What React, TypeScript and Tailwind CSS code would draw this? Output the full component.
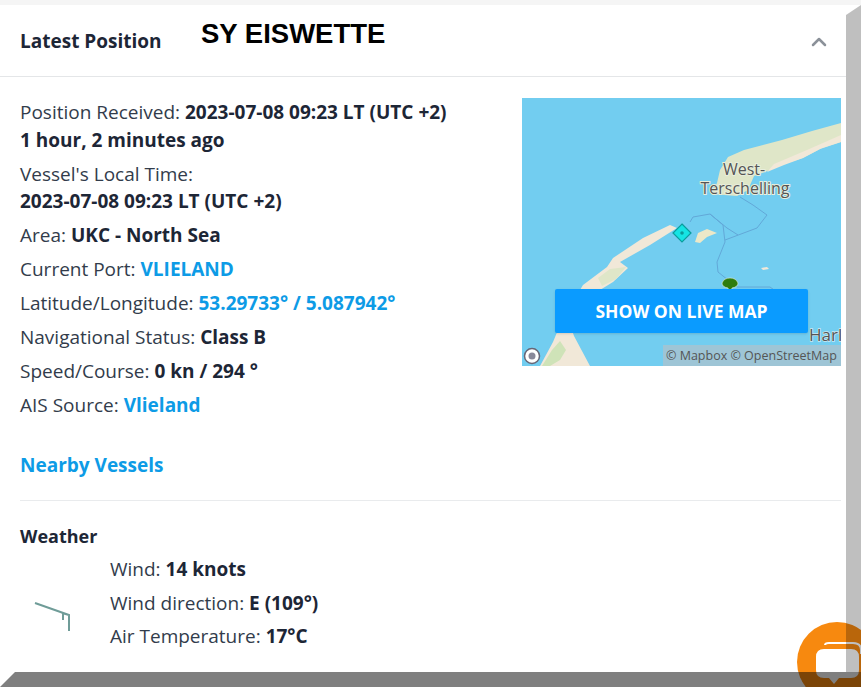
import { ChevronUp } from "lucide-react";

const font = { fontFamily: '"Open Sans", "Noto Sans", sans-serif' };

const MapDrawing = () => (
  <svg viewBox="0 0 319 268" className="block h-[268px] w-[319px]">
    <rect width="319" height="268" fill="#72cdf0" />
    {/* Terschelling */}
    <path d="M195 85 L198 72 L206 59 L222 52 L260 42 L290 33 L319 25 L319 44 L300 50 L281 60 L262 66 L248 72 L232 78 L226 92 L215 98 L190 96 Z" fill="#dfe6c8" />
    <path d="M319 37 L319 44 L298 51 L281 60 L262 67 L245 74 L252 66 L285 52 Z" fill="#f1e8d8" />
    {/* Vlieland */}
    <path d="M148 127 L155 130 L128 147 L98 164 L106 170 L91 184 L78 192 L58 192 L61 187 L85 169 L91 160 L121 140 Z" fill="#f1e8d8" />
    <path d="M76 180 L88 171 L104 169 L94 181 L80 188 Z" fill="#dfe6c8" />
    <path d="M173 144 L176 135 L185 131 L195 135 L185 139 L178 145 Z" fill="#ece8c8" />
    <path d="M239 170 L245 169 L247 171 L241 172 Z" fill="#f1e8d8" />
    {/* Texel tip */}
    <path d="M18 268 L31 244 L36 232 L50 232 L52 238 L68 268 Z" fill="#f1e8d8" />
    <path d="M20 268 L30 252 L38 243 L44 252 L38 262 L28 268 Z" fill="#cfe3b8" />
    {/* Route */}
    <path d="M168 124 L171 119 L188 116 L201 127 L203 144 L195 164 L196 174 L206 182 M215 189 L248 189 L255 194" fill="none" stroke="#62a8d8" strokeWidth="1" />
    <path d="M188 116 L205 130 L216 137 M203 142 L235 130 L245 117 L231 107 L218 99" fill="none" stroke="#62a8d8" strokeWidth="1" />
    {/* Vessel marker */}
    <path d="M160 126 L169 135 L160 144 L151 135 Z" fill="#15e4e4" stroke="#0b9c9c" strokeWidth="1.2" />
    <circle cx="160" cy="135" r="1.8" fill="#0b9c9c" />
    {/* Tree */}
    <path d="M208 180 Q214 180 216 185 Q216 189 210 190 L209 193 L207 193 L206 190 Q200 189 200 185 Q202 180 208 180 Z" fill="#2f7d0e" stroke="#e8eedc" strokeWidth="0.6" />
    <text x="222" y="77" fontSize="16" fill="#555" stroke="#e8eedc" strokeWidth="2" paintOrder="stroke" textAnchor="middle" style={font}>
      West-
    </text>
    <text x="223" y="96" fontSize="16" fill="#555" stroke="#e8eedc" strokeWidth="2" paintOrder="stroke" textAnchor="middle" style={font}>
      Terschelling
    </text>
    <text x="287" y="243" fontSize="17" fill="#555" stroke="#cfe8f0" strokeWidth="1.5" paintOrder="stroke" style={font}>
      Harl
    </text>
    {/* Mapbox mark */}
    <circle cx="10" cy="258" r="7.5" fill="#fff" stroke="#667" strokeWidth="1.5" />
    <circle cx="10" cy="258" r="3.5" fill="#889" />
  </svg>
);

const Row = ({ label, value, link }: { label: string; value: string; link?: boolean }) => (
  <p className="mt-[6px] h-[28px] leading-[28px]">
    {label}: <span className={link ? "font-bold text-[#0d9be6]" : "font-bold text-[#1d2636]"}>{value}</span>
  </p>
);

const WindBarb = () => (
  <svg viewBox="0 0 40 34" className="h-[34px] w-[40px]">
    <path d="M1 1 L35 13 L35 29 M28 11 L35 13 M29 12 L29 18" fill="none" stroke="#6f9c98" strokeWidth="2" />
  </svg>
);

export default function App() {
  return (
    <div className="relative flex h-[687px] w-[861px] flex-col overflow-hidden bg-white text-[19px] text-[#323c4b]" style={font}>
      {/* chat bubble, sits under the dark strips */}
      <div className="absolute left-[797px] top-[622px] h-[80px] w-[80px] rounded-full bg-[#f7890f]">
        <svg viewBox="0 0 60 50" className="absolute left-[18px] top-[20px] h-[50px] w-[60px]">
          <path d="M10 3 Q10 1 14 1 L38 1 Q46 1 46 8 L46 12" fill="none" stroke="#fff" strokeWidth="2" />
          <path d="M9 7 L36 7 Q44 7 44 15 L44 28 Q44 36 36 36 L24 36 L19 42 L14 36 L9 36 Q1 36 1 28 L1 15 Q1 7 9 7 Z" fill="#fff" />
        </svg>
      </div>

      <div className="h-[5px] shrink-0 bg-[#f5f5f5]" />
      <div className="flex min-h-0 flex-1">
        <main className="flex-1 rounded-tl-[10px]">
          <header className="flex h-[72px] items-center border-b border-[#e4e6e8] pl-[20px] pr-[15px]">
            <h2 className="mt-[1px] w-[181px] text-[19px] font-bold text-[#1d2636]">Latest Position</h2>
            <span className="mb-[13px] text-[27.5px] font-bold text-black" style={{ fontFamily: '"Liberation Sans", Arial, sans-serif' }}>
              SY EISWETTE
            </span>
            <ChevronUp className="ml-auto mt-[3px] h-[24px] w-[24px] text-[#8b9199]" strokeWidth={2.5} />
          </header>

          <div className="flex justify-between pl-[20px] pr-[5px]">
            <div className="pt-[21px]">
              <p className="leading-[28px]">
                Position Received: <span className="font-bold text-[#1d2636]">2023-07-08 09:23 LT (UTC +2)</span>
                <br />
                <span className="font-bold text-[#1d2636]">1 hour, 2 minutes ago</span>
              </p>
              <p className="mt-[7px] leading-[27px]">
                Vessel's Local Time:
                <br />
                <span className="font-bold text-[#1d2636]">2023-07-08 09:23 LT (UTC +2)</span>
              </p>
              <Row label="Area" value="UKC - North Sea" />
              <Row label="Current Port" value="VLIELAND" link />
              <Row label="Latitude/Longitude" value="53.29733° / 5.087942°" link />
              <Row label="Navigational Status" value="Class B" />
              <Row label="Speed/Course" value="0 kn / 294 °" />
              <Row label="AIS Source" value="Vlieland" link />
              <p className="mt-[32px] font-bold leading-[28px] text-[#0d9be6]">Nearby Vessels</p>
            </div>
            <div className="relative mt-[21px] h-[268px] w-[319px] overflow-hidden">
              <MapDrawing />
              <button className="absolute left-[33px] top-[191px] h-[44px] w-[253px] rounded-[2px] bg-[#0a9bff] text-[17.5px] font-bold text-white shadow">
                SHOW ON LIVE MAP
              </button>
              <span className="absolute bottom-0 right-0 h-[21px] w-[178px] whitespace-nowrap bg-[#a9c3cf]/80 pl-[3px] text-[12.5px] leading-[21px] text-[#555]">
                © Mapbox © OpenStreetMap
              </span>
            </div>
          </div>

          <div className="ml-[20px] mr-[5px] mt-[21px] border-t border-[#e9ebed] pt-[21px]">
            <h3 className="text-[18px] font-bold leading-[28px] text-[#1d2636]">Weather</h3>
            <div className="flex">
              <div className="w-[90px] pl-[14px] pt-[52px]">
                <WindBarb />
              </div>
              <div className="mt-[5px]">
                <p className="h-[28px] leading-[28px]">
                  Wind: <span className="font-bold text-[#1d2636]">14 knots</span>
                </p>
                <p className="mt-[6px] h-[28px] leading-[28px]">
                  Wind direction: <span className="font-bold text-[#1d2636]">E (109°)</span>
                </p>
                <p className="mt-[5px] h-[28px] leading-[28px]">
                  Air Temperature: <span className="font-bold text-[#1d2636]">17°C</span>
                </p>
              </div>
            </div>
          </div>
        </main>
        <div className="w-[15px] shrink-0 bg-black/25 [clip-path:polygon(100%_0,100%_100%,0_100%,0_10px)]" />
      </div>
      <div className="h-[15px] shrink-0 bg-black/50 [clip-path:polygon(15px_0,100%_0,100%_100%,0_100%)]" />
    </div>
  );
}
